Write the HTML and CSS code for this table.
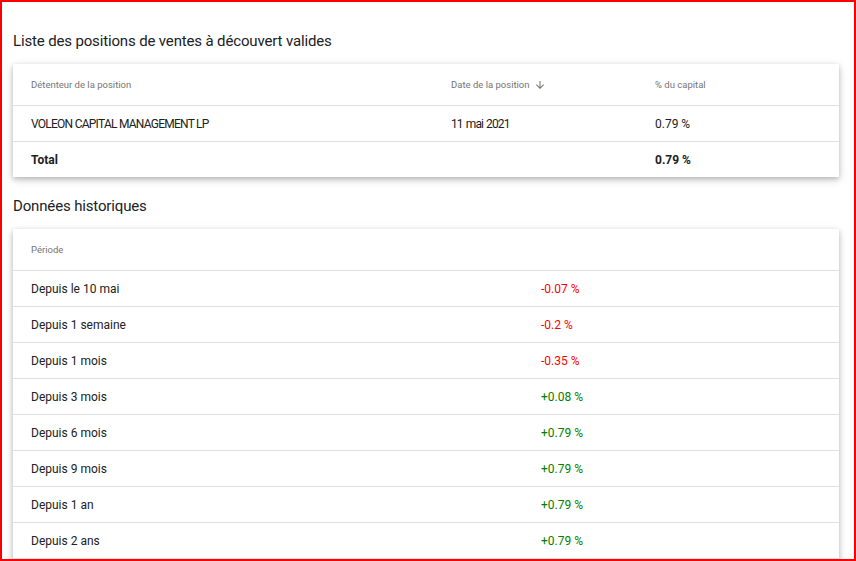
FILE: index.html
```html
<!DOCTYPE html>
<html lang="fr">
<head>
<meta charset="utf-8">
<link rel="stylesheet" href="styles.css">
</head>
<body>
<div class="frame">
  <h2 class="title first">Liste des positions de ventes à découvert valides</h2>
  <div class="card">
    <div class="row head three">
      <div>Détenteur de la position</div>
      <div class="sort">Date de la position
        <svg class="arrow" viewBox="0 0 24 24" width="12" height="12"><path d="M20 12l-1.41-1.41L13 16.17V4h-2v12.17l-5.58-5.59L4 12l8 8 8-8z" fill="#757575"/></svg>
      </div>
      <div>% du capital</div>
    </div>
    <div class="row three">
      <div class="caps">VOLEON CAPITAL MANAGEMENT LP</div>
      <div class="date">11 mai 2021</div>
      <div>0.79 %</div>
    </div>
    <div class="row three total">
      <div>Total</div>
      <div></div>
      <div>0.79 %</div>
    </div>
  </div>

  <h2 class="title">Données historiques</h2>
  <div class="card">
    <div class="row head two">
      <div>Période</div>
      <div></div>
    </div>
    <div class="row two"><div>Depuis le 10 mai</div><div class="neg">-0.07 %</div></div>
    <div class="row two"><div>Depuis 1 semaine</div><div class="neg">-0.2 %</div></div>
    <div class="row two"><div>Depuis 1 mois</div><div class="neg">-0.35 %</div></div>
    <div class="row two"><div>Depuis 3 mois</div><div class="pos">+0.08 %</div></div>
    <div class="row two"><div>Depuis 6 mois</div><div class="pos">+0.79 %</div></div>
    <div class="row two"><div>Depuis 9 mois</div><div class="pos">+0.79 %</div></div>
    <div class="row two"><div>Depuis 1 an</div><div class="pos">+0.79 %</div></div>
    <div class="row two"><div>Depuis 2 ans</div><div class="pos">+0.79 %</div></div>
    <div class="row two empty"></div>
  </div>
</div>
</body>
</html>
```

FILE: styles.css
```css
* { box-sizing: border-box; }
html, body { margin: 0; padding: 0; background: #fff; }
body {
  font-family: Roboto, "Liberation Sans", Arial, sans-serif;
  color: #212121;
}
.frame {
  width: 856px;
  height: 561px;
  border: 2px solid #ff0000;
  overflow: hidden;
  padding: 0 14px 0 11px;
}
.title {
  margin: 19px 0 13px;
  font-size: 15px;
  line-height: 20px;
  font-weight: 400;
  color: #202124;
  letter-spacing: -0.15px;
}
.title.first { margin-top: 29px; }
.card {
  background: #fff;
  box-shadow: 0 2px 5px rgba(0,0,0,0.22), 0 3px 10px rgba(0,0,0,0.12);
  width: 826px;
}
.row {
  display: grid;
  align-items: center;
  height: 36px;
  padding-left: 18px;
  font-size: 12px;
  border-bottom: 1px solid #e0e0e0;
}
.row:last-child { border-bottom: none; }
.row.head {
  height: 42px;
  font-size: 9.5px;
  color: #757575;
}
.caps { letter-spacing: -0.75px; }
.date { letter-spacing: -0.9px; word-spacing: 1px; }
.three { grid-template-columns: 420px 204px 1fr; }
.two { grid-template-columns: 510px 1fr; }
.total { font-weight: 700; height: 35px; }
.sort { display: flex; align-items: center; gap: 4px; }
.arrow { display: block; }
.neg { color: #ff0000; }
.pos { color: #008000; }
```
